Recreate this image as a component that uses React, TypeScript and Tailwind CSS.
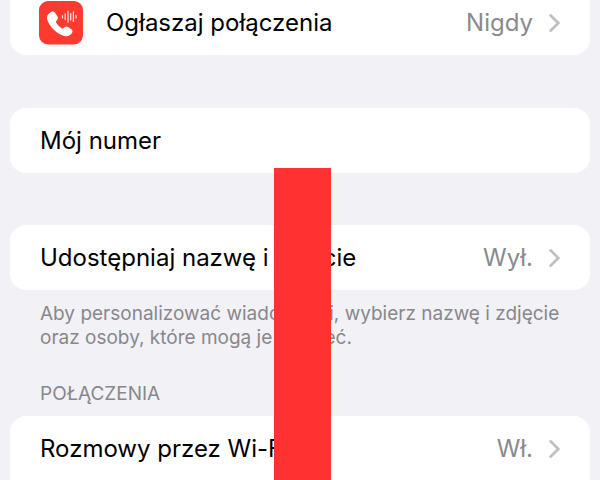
import type { ReactNode } from "react";

function Chevron() {
  return (
    <svg className="h-[22px] w-[11px] shrink-0 text-[#bfbfc3]" viewBox="0 0 11 22" fill="none" aria-hidden="true">
      <path d="M1.500 3.300 9.300 11l-7.800 7.700" stroke="currentColor" strokeWidth="2.600" strokeLinecap="round" strokeLinejoin="miter" />
    </svg>
  );
}

function CallIcon() {
  return (
    <svg className="h-11 w-11 shrink-0" viewBox="0 0 44 44" aria-hidden="true">
      <rect width="44" height="43.500" rx="9" fill="#fc3a2f" />
      <path
        d="M12 10.900c1.500-.9 3-.5 4 .9l2.400 3.500c.8 1.200.7 2.400-.2 3.500l-.9 1.100c-.5.600-.5 1.200-.1 1.900 1.500 2.300 3.100 3.900 5.400 5.400.7.500 1.300.4 1.900-.1l1.100-.9c1.100-.9 2.300-1 3.500-.2l3.200 2.200c1.400 1 1.600 2.400.7 3.800-1.800 2.700-4.500 3.700-7.700 2.900C17.800 33 10.100 25.300 8.100 18.200c-.8-3 .7-5.500 3.900-7.300z"
        fill="#fff"
      />
      <path
        d="M23.500 14.800v2M26.200 12.800v5.800M29 10.200v11M31.700 12.600v6.400M34.400 10.900v9.600M37 14.600v2.400"
        stroke="#fff"
        strokeOpacity="0.9"
        strokeWidth="1.200"
        strokeLinecap="round"
      />
    </svg>
  );
}

function Row({ label, value, icon }: { label: string; value?: string; icon?: ReactNode }) {
  return (
    <button type="button" className="flex w-full items-center px-[30px] text-left text-2xl">
      {icon && <span className="mr-[23px] -ml-px">{icon}</span>}
      <span className="flex-1 text-black">{label}</span>
      {value && (
        <>
          <span className="mr-4 text-[#8a8a8d]">{value}</span>
          <Chevron />
        </>
      )}
    </button>
  );
}

export default function App() {
  return (
    <main className="relative flex min-h-screen flex-col bg-[#f2f1f6] px-[10px] font-['Inter',sans-serif]">
      <section className="rounded-b-2xl bg-white pt-px pb-[10px]">
        <Row label="Ogłaszaj połączenia" value="Nigdy" icon={<CallIcon />} />
      </section>

      <section className="mt-[53px] rounded-2xl bg-white pt-[17px] pb-4">
        <Row label="Mój numer" />
      </section>

      <section className="mt-[52px]">
        <div className="rounded-2xl bg-white pt-[17px] pb-4">
          <Row label="Udostępniaj nazwę i zdjęcie" value="Wył." />
        </div>
        <p className="mt-3 pr-[20px] pl-[30px] text-[19px]/6 text-[#88878c]">
          Aby personalizować wiadomości, wybierz nazwę i zdjęcie oraz osoby, które mogą je widzieć.
        </p>
      </section>

      <section className="mt-8 flex flex-1 flex-col">
        <h2 className="px-[30px] text-[19px]/6 text-[#88878c]">POŁĄCZENIA</h2>
        <div className="mt-[10px] flex-1 rounded-t-2xl bg-white pt-[17px]">
          <Row label="Rozmowy przez Wi-Fi" value="Wł." />
        </div>
      </section>

      <div className="absolute top-[168px] bottom-0 left-[274px] w-[57px] bg-[#ff3131]" />
    </main>
  );
}
